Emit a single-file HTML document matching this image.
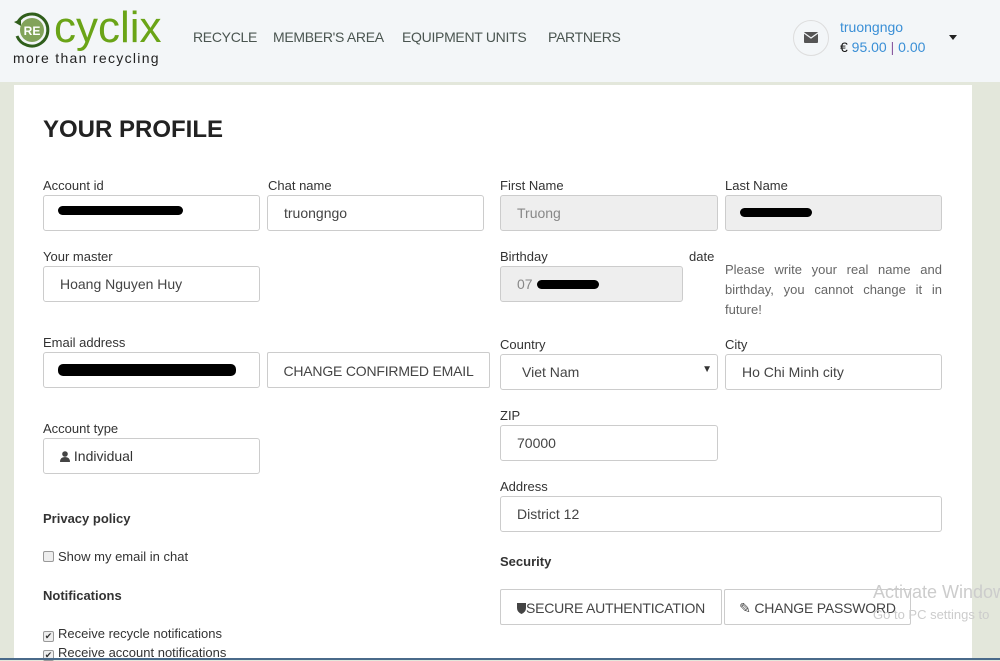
<!DOCTYPE html>
<html><head><meta charset="utf-8"><style>
*{box-sizing:border-box;margin:0;padding:0}
body{width:1000px;height:660px;overflow:hidden;background:#e3e7db;font-family:"Liberation Sans",sans-serif;color:#333;position:relative}
.hdr{position:absolute;left:0;top:0;width:1000px;height:82px;background:#f3f6f8}
.panel{position:absolute;left:14px;top:85px;width:958px;height:575px;background:#fff}
.a{position:absolute;white-space:nowrap}
.nav{font-size:14px;color:#4a5550;top:29px;letter-spacing:-0.3px}
.lbl{font-size:13px;color:#333}
.inp{position:absolute;height:36px;border:1px solid #ccc;border-radius:3px;background:#fff;font-size:14px;color:#444;padding:9px 0 0 16px;white-space:nowrap}
.dis{background:#eee;color:#888}
.btn{position:absolute;height:36px;border:1px solid #ccc;border-radius:2px;background:#fff;font-size:14px;color:#444;text-align:center;padding-top:10px;white-space:nowrap;letter-spacing:-0.2px}
.b{font-weight:bold;font-size:13px}
.cb{display:inline-block;width:11px;height:11px;border:1px solid #999;border-radius:2px;background:#eee;vertical-align:-1px;margin-right:4px;font-size:9px;line-height:9px;text-align:center;color:#333}
.scr{position:absolute;height:9px;background:#000;border-radius:5px}
</style></head><body>
<div class="hdr"></div>
<div class="panel"></div>
<svg class="a" style="left:12px;top:10px" width="40" height="40" viewBox="0 0 40 40">
<path d="M6 12 A16 16 0 1 1 5 26" fill="none" stroke="#2f5e1b" stroke-width="3"/>
<path d="M2 12 L9 9 L9 16Z" fill="#2f5e1b"/>
<circle cx="20" cy="20" r="12" fill="#82a35a"/>
<text x="20" y="25" font-family="Liberation Sans" font-weight="bold" font-size="12" fill="#fff" text-anchor="middle">RE</text>
</svg>
<div class="a" style="left:54px;top:3px;font-size:44px;color:#6aa417">cyclix</div>
<div class="a" style="left:13px;top:50px;font-size:14px;letter-spacing:1.3px;color:#222">more than recycling</div>
<div class="a nav" style="left:193px">RECYCLE</div>
<div class="a nav" style="left:273px">MEMBER'S AREA</div>
<div class="a nav" style="left:402px">EQUIPMENT UNITS</div>
<div class="a nav" style="left:548px">PARTNERS</div>
<div class="a" style="left:793px;top:20px;width:36px;height:36px;border:1px solid #ddd;border-radius:50%;background:#f3f6f8"></div>
<svg class="a" style="left:804px;top:32px" width="14" height="11" viewBox="0 0 14 11"><rect width="14" height="11" rx="1" fill="#555"/><path d="M0 1 L7 6 L14 1" fill="none" stroke="#f3f6f8" stroke-width="1.3"/></svg>
<div class="a" style="left:840px;top:19px;font-size:14px;color:#3a8fd6">truongngo</div>
<div class="a" style="left:840px;top:39px;font-size:14px;color:#3a8fd6"><span style="color:#111">€</span> 95.00 <span style="color:#8a5aa0">|</span> 0.00</div>
<div class="a" style="left:949px;top:35px;width:0;height:0;border-left:4px solid transparent;border-right:4px solid transparent;border-top:5px solid #222"></div>

<div class="a" style="left:43px;top:116px;font-size:24px;font-weight:bold;color:#222">YOUR PROFILE</div>

<div class="a lbl" style="left:43px;top:178px">Account id</div>
<div class="inp" style="left:43px;top:195px;width:217px"></div>
<div class="scr" style="left:58px;top:206px;width:125px"></div>
<div class="a lbl" style="left:268px;top:178px">Chat name</div>
<div class="inp" style="left:267px;top:195px;width:217px">truongngo</div>
<div class="a lbl" style="left:500px;top:178px">First Name</div>
<div class="inp dis" style="left:500px;top:195px;width:218px">Truong</div>
<div class="a lbl" style="left:725px;top:178px">Last Name</div>
<div class="inp dis" style="left:725px;top:195px;width:217px"></div>
<div class="scr" style="left:740px;top:208px;width:72px"></div>

<div class="a lbl" style="left:43px;top:249px">Your master</div>
<div class="inp" style="left:43px;top:266px;width:217px">Hoang Nguyen Huy</div>
<div class="a lbl" style="left:500px;top:249px">Birthday</div>
<div class="a lbl" style="left:689px;top:249px">date</div>
<div class="inp dis" style="left:500px;top:266px;width:183px">07</div>
<div class="scr" style="left:537px;top:280px;width:62px"></div>
<div class="a" style="left:725px;top:260px;width:217px;font-size:13px;line-height:20px;color:#666;white-space:normal;text-align:justify;text-align-last:left">Please write your real name and birthday, you cannot change it in future!</div>

<div class="a lbl" style="left:43px;top:335px">Email address</div>
<div class="inp" style="left:43px;top:352px;width:217px"></div>
<div class="scr" style="left:58px;top:364px;width:178px;height:12px"></div>
<div class="btn" style="left:267px;top:352px;width:223px">CHANGE CONFIRMED EMAIL</div>
<div class="a lbl" style="left:500px;top:337px">Country</div>
<div class="inp" style="left:500px;top:354px;width:218px;padding-left:21px">Viet Nam<span style="position:absolute;right:5px;top:9px;font-size:10px;color:#333">▼</span></div>
<div class="a lbl" style="left:725px;top:337px">City</div>
<div class="inp" style="left:725px;top:354px;width:217px">Ho Chi Minh city</div>

<div class="a lbl" style="left:500px;top:408px">ZIP</div>
<div class="inp" style="left:500px;top:425px;width:218px">70000</div>
<div class="a lbl" style="left:43px;top:421px">Account type</div>
<div class="inp" style="left:43px;top:438px;width:217px;color:#333"><svg width="10" height="11" viewBox="0 0 10 11" style="vertical-align:-1px"><circle cx="5" cy="3" r="2.8" fill="#444"/><path d="M0 11 Q0 6 5 6 Q10 6 10 11Z" fill="#444"/></svg> Individual</div>

<div class="a lbl" style="left:500px;top:479px">Address</div>
<div class="inp" style="left:500px;top:496px;width:442px">District 12</div>

<div class="a b" style="left:43px;top:511px">Privacy policy</div>
<div class="a lbl" style="left:43px;top:549px"><span class="cb"></span>Show my email in chat</div>
<div class="a b" style="left:500px;top:554px">Security</div>
<div class="btn" style="left:500px;top:589px;width:222px"><svg width="9" height="11" viewBox="0 0 9 11" style="vertical-align:-1px"><path d="M0 0 H9 V5 Q9 9 4.5 11 Q0 9 0 5Z" fill="#444"/></svg>SECURE AUTHENTICATION</div>
<div class="btn" style="left:724px;top:589px;width:187px">&#x270E; CHANGE PASSWORD</div>
<div class="a b" style="left:43px;top:588px">Notifications</div>
<div class="a lbl" style="left:43px;top:626px"><span class="cb">✔</span>Receive recycle notifications</div>
<div class="a lbl" style="left:43px;top:645px"><span class="cb">✔</span>Receive account notifications</div>
<div class="a" style="left:873px;top:582px;font-size:18px;color:#ccc">Activate Windows</div>
<div class="a" style="left:873px;top:607px;font-size:13px;color:#ccc">Go to PC settings to</div>
<div class="a" style="left:0;top:658px;width:1000px;height:2px;background:#4a6a8a"></div>
</body></html>
